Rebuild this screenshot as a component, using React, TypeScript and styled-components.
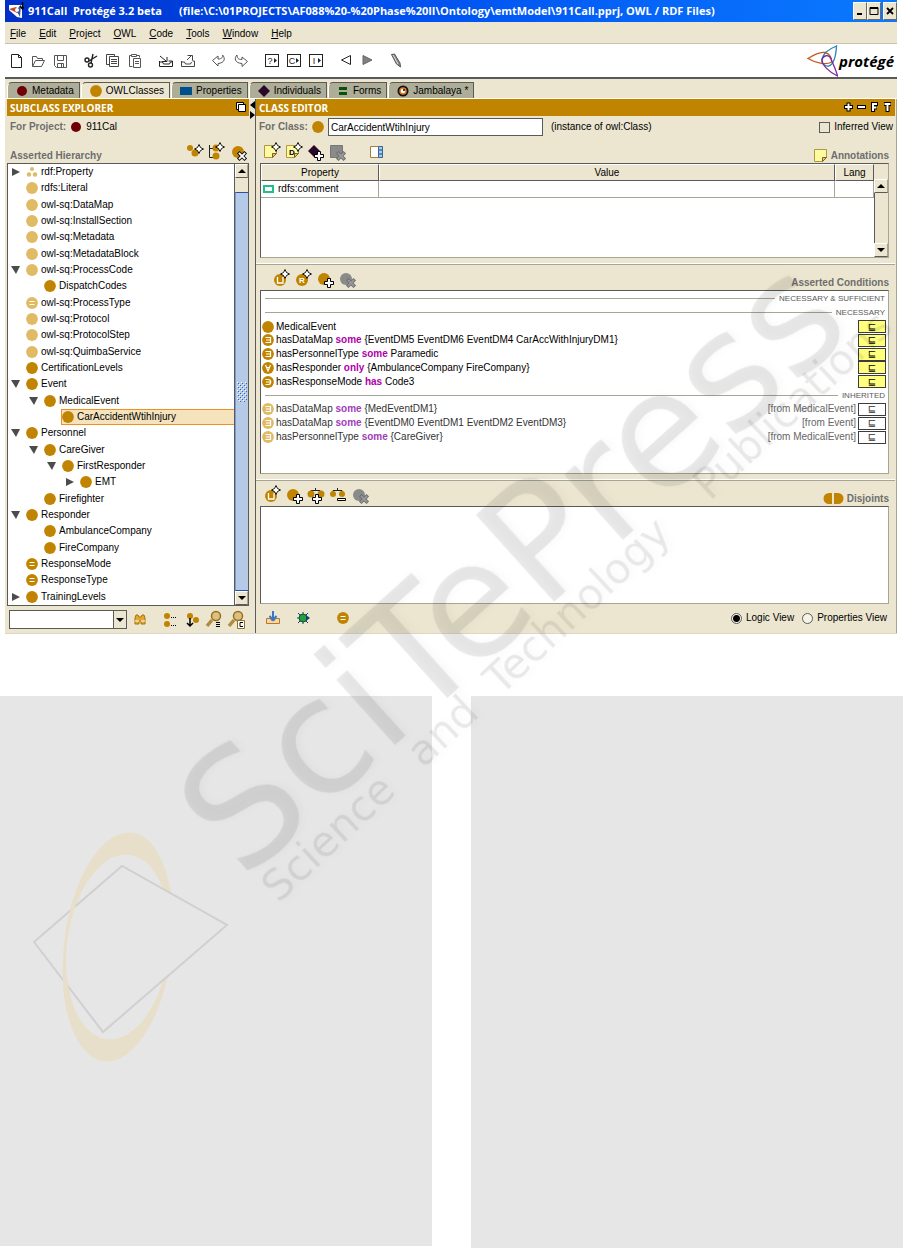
import React from "react";
import styled, { createGlobalStyle, css } from "styled-components";

const C = {
  beige: "#ece6d0",
  gold: "#c08400",
  pale: "#e0ba64",
  dark: "#5a5a5a",
  mid: "#a6a698",
  tab: "#adad98",
  label: "#6e6e6e",
  maroon: "#6e0008",
};

const SANS = `"Liberation Sans", Arial, sans-serif`;
const HUMAN = `"Open Sans", "Noto Sans", sans-serif`;

const GlobalStyle = createGlobalStyle`
  *, *::before, *::after { box-sizing: border-box; }
  body { margin: 0; background: #fff; color: #000; font: 10px/14px ${SANS}; }
  button, input, select { font: inherit; color: inherit; margin: 0; }
  ul { list-style: none; margin: 0; padding: 0; }
`;

/* ---------- page ---------- */

const Page = styled.div`
  position: relative;
  overflow: hidden;
`;

const AppWindow = styled.main`
  margin: 0 21px 0 5px;
  background: ${C.beige};
  border-bottom: 1px solid #dcd8c8;
`;

const TitleBar = styled.header`
  display: flex;
  align-items: center;
  height: 22px;
  padding-left: 3px;
  background: linear-gradient(90deg, #0030c8, #0050f0 45%, #0a7aff);
  color: #fff;
`;

const Title = styled.h1`
  flex: 1;
  margin: 0 0 0 4px;
  font: bold 11px/22px ${HUMAN};
  white-space: pre;
`;

const WindowButton = styled.button<{ $apart?: boolean }>`
  width: 14px;
  height: 18px;
  padding: 0;
  margin-left: ${(p) => (p.$apart ? 2 : 0)}px;
  border: 1px solid;
  border-color: #fff #6e6a5c #6e6a5c #fff;
  background: ${C.beige};
  svg { display: block; margin: auto; }
`;

const MenuBar = styled.nav`
  display: flex;
  gap: 13px;
  height: 22px;
  padding-left: 5px;
  border-bottom: 1px solid #c8c2ac;
`;

const MenuButton = styled.button`
  padding: 2px 0 0;
  border: 0;
  background: none;
  &::first-letter { text-decoration: underline; }
`;

const ToolBar = styled.div`
  display: flex;
  align-items: center;
  gap: 9px;
  height: 35px;
  background: #fff;
  border-bottom: 2px solid ${C.dark};
`;

const Group = styled.div<{ $lead?: number }>`
  display: flex;
  margin-left: ${(p) => p.$lead ?? 0}px;
`;

const IconButton = styled.button`
  display: flex;
  align-items: center;
  justify-content: center;
  width: 22px;
  height: 22px;
  padding: 0;
  border: 0;
  background: none;
`;

const Logo = styled.div`
  display: flex;
  align-items: center;
  gap: 1px;
  margin-left: auto;
  padding-right: 3px;
  font: italic bold 15px/22px ${HUMAN};
`;

/* ---------- tabs ---------- */

const TabStrip = styled.div`
  display: flex;
  align-items: flex-end;
  gap: 1px;
  height: 19px;
  padding-left: 2px;
`;

const Tab = styled.button<{ $active?: boolean }>`
  display: flex;
  align-items: center;
  gap: 4px;
  height: 16px;
  padding: 0 5px 0 8px;
  border: 0;
  border-top: 1px solid ${C.dark};
  border-right: 1px solid ${C.dark};
  border-left: 1px solid #fff;
  border-top-left-radius: 5px;
  background: ${(p) => (p.$active ? C.beige : C.tab)};
`;

/* ---------- panes ---------- */

const Panes = styled.div`
  display: grid;
  grid-template-columns: 244px 7px 1fr;
  border-top: 1px solid #fff;
`;

const Explorer = styled.section`
  padding-left: 2px;
  display: flex;
  flex-direction: column;
`;

const Splitter = styled.div`
  border-right: 1px solid ${C.dark};
  padding-top: 2px;
  background: ${C.beige};
  svg { display: block; }
`;

const Editor = styled.section`
  display: flex;
  flex-direction: column;
  border-right: 1px solid ${C.mid};
  padding-right: 1px;
`;

const GoldBar = styled.div`
  display: flex;
  align-items: center;
  justify-content: space-between;
  height: 17px;
  padding: 0 3px;
  background: ${C.gold};
  color: #fff;
`;

const GoldTitle = styled.h2`
  margin: 0;
  font: bold 10px/16px ${HUMAN};
`;

const FieldRow = styled.div`
  display: flex;
  align-items: center;
  height: 22px;
  padding: 0 2px 0 3px;
  gap: 4px;
`;

const Caption = styled.h3`
  margin: 0;
  font: bold 10px/14px ${SANS};
  color: ${C.label};
`;

const CaptionLabel = styled.label`
  font-weight: bold;
  color: ${C.label};
`;

const Actions = styled.div<{ $height: number; $indent?: number }>`
  display: flex;
  align-items: flex-end;
  height: ${(p) => p.$height}px;
  padding: 0 6px 0 ${(p) => p.$indent ?? 5}px;
  ${Caption} { margin-left: auto; display: flex; align-items: center; gap: 3px; }
`;

const ExplorerHead = styled.div`
  display: flex;
  align-items: flex-end;
  height: 25px;
  padding: 0 0 0 3px;
  ${Caption} { flex: 1; }
`;

const Inset = styled.div`
  border: 1px solid;
  border-color: ${C.dark} ${C.mid} ${C.mid} ${C.dark};
  background: #fff;
`;

const TreeBox = styled(Inset)`
  display: grid;
  grid-template-columns: 1fr 14px;
  width: 242px;
  height: 443px;
  border-color: ${C.dark};
`;

const TreeList = styled.ul`
  display: flex;
  flex-direction: column;
`;

const TreeRow = styled.li<{ $level: number }>`
  flex: 1;
  display: flex;
  align-items: center;
  padding-left: ${(p) => p.$level * 18}px;
`;

const Twisty = styled.span`
  display: flex;
  justify-content: center;
  width: 15px;
  margin-right: 3px;
`;

const NodeLabel = styled.span<{ $selected?: boolean }>`
  display: flex;
  align-items: center;
  gap: 3px;
  line-height: 14px;
  ${(p) =>
    p.$selected &&
    css`
      flex: 1;
      background: #f4e3bd;
      outline: 1px solid #f09020;
    `}
`;

const ScrollBar = styled.div`
  display: flex;
  flex-direction: column;
  border-left: 1px solid ${C.dark};
  background: ${C.beige};
`;

const ScrollButton = styled.button`
  display: flex;
  align-items: center;
  justify-content: center;
  height: 14px;
  padding: 0;
  border: 1px solid ${C.dark};
  border-color: #fff ${C.mid} ${C.dark} #fff;
  background: ${C.beige};
`;

const Track = styled.div`
  flex: 1;
  display: flex;
  flex-direction: column;
  padding-top: 14px;
`;

const Thumb = styled.div`
  flex: 1;
  display: flex;
  align-items: center;
  justify-content: center;
  border: 1px solid #2a50a8;
  border-width: 1px 0 1px 1px;
  border-left-color: #7a9cd4;
  background: #b5cae6;
`;

const ExplorerFoot = styled.div`
  display: flex;
  align-items: center;
  height: 27px;
  padding-left: 2px;
`;

const Combo = styled.label`
  display: grid;
  width: 118px;
  height: 19px;
  margin-right: 2px;
  border: 1px solid ${C.dark};
  background: #fff;
  > * { grid-area: 1 / 1; }
  svg {
    justify-self: end;
    pointer-events: none;
    border-left: 1px solid ${C.dark};
    background: ${C.beige};
  }
`;

const ComboSelect = styled.select`
  appearance: none;
  border: 0;
  background: none;
  padding: 0 14px 0 3px;
`;

const ClassInput = styled.input`
  width: 215px;
  height: 18px;
  padding: 0 2px;
  border: 1px solid ${C.dark};
  background: #fff;
`;

const Note = styled.span`
  flex: 1;
  padding-left: 4px;
`;

const CheckLabel = styled.label`
  display: flex;
  align-items: center;
  gap: 4px;
`;

const CheckBox = styled.input`
  appearance: none;
  width: 11px;
  height: 11px;
  border: 1px solid ${C.dark};
  background: ${C.beige};
`;

const RadioDot = styled.input`
  appearance: none;
  width: 11px;
  height: 11px;
  border: 1px solid ${C.dark};
  border-radius: 50%;
  background: #f6f3e6;
  &:checked { background: radial-gradient(#000 0 3px, #f6f3e6 4px); }
`;

const Boxed = styled.div`
  padding: 0 6px 6px 4px;
  border-bottom: 1px solid ${C.mid};
  box-shadow: inset 0 -1px #fff;
`;

/* ---------- annotations table ---------- */

const TableBox = styled(Inset)`
  display: grid;
  grid-template-columns: 1fr 14px;
  height: 95px;
`;

const Table = styled.table`
  width: 100%;
  align-self: start;
  border-collapse: separate;
  border-spacing: 0;
  table-layout: fixed;
`;

const Th = styled.th<{ $width?: number }>`
  width: ${(p) => (p.$width ? p.$width + "px" : "auto")};
  height: 17px;
  padding: 0;
  font-weight: normal;
  background: ${C.beige};
  border: 1px solid;
  border-color: #fff ${C.dark} ${C.dark} #fff;
`;

const Td = styled.td`
  height: 17px;
  padding: 0 2px;
  border: 1px solid ${C.mid};
  border-width: 0 1px 1px 0;
`;

const CellContent = styled.span`
  display: flex;
  align-items: center;
  gap: 4px;
`;

const TableScroll = styled.div`
  display: flex;
  flex-direction: column;
  padding-top: 15px;
  background: ${C.beige};
`;

const TableTrack = styled.div`
  flex: 1;
  border-left: 1px solid ${C.dark};
`;

/* ---------- conditions ---------- */

const ConditionBox = styled(Inset)`
  height: 184px;
  padding: 1px 2px 0 0;
`;

const ConditionList = styled.ul`
  display: grid;
  grid-template-rows: repeat(11, 1fr);
  height: 152px;
`;

const SectionRow = styled.li`
  display: flex;
  align-items: center;
  gap: 4px;
  padding: 0 1px 0 4px;
  font-size: 8px;
  line-height: 12px;
  color: #585858;
  &::before { content: ""; flex: 1; border-top: 1px solid ${C.mid}; }
`;

const ConditionRow = styled.li<{ $inherited?: boolean }>`
  display: flex;
  align-items: center;
  gap: 2px;
  padding-left: 1px;
  line-height: 12px;
  white-space: pre;
  color: ${(p) => (p.$inherited ? "#333" : "#000")};
  b { color: ${(p) => (p.$inherited ? "#a040b8" : "#b000a8")}; }
`;

const Origin = styled.span`
  margin-left: auto;
  color: #666;
`;

const SubsetButton = styled.button<{ $plain?: boolean }>`
  width: 28px;
  height: 13px;
  padding: 0;
  border: 1px solid #3c3c3c;
  background: ${(p) => (p.$plain ? "#fff" : "#ffff7c")};
  font: 10px/10px "DejaVu Sans", sans-serif;
`;

const DisjointBox = styled(Inset)`
  height: 98px;
  margin: 0 6px 0 4px;
`;

const EditorFoot = styled.div`
  display: flex;
  align-items: center;
  height: 28px;
  padding: 0 8px 0 6px;
`;

const FootButtons = styled.div`
  display: flex;
  flex: 1;
  gap: 8px;
  > :last-child { margin-left: 10px; }
`;

const Radios = styled.div`
  display: flex;
  gap: 8px;
`;

/* ---------- lower blocks and watermark ---------- */

const Columns = styled.div`
  display: grid;
  grid-template-columns: 1fr 1fr;
  gap: 39px;
  padding: 62px 15px 0 0;
`;

const Column = styled.div<{ $height: number }>`
  height: ${(p) => p.$height}px;
  background: #e6e6e6;
`;

const Watermark = styled.svg`
  position: absolute;
  top: 0;
  left: 0;
  pointer-events: none;
  font-family: "DejaVu Sans", sans-serif;
  text {
    fill: rgba(0, 0, 0, 0.085);
    filter: drop-shadow(4px 2px 3px rgba(0, 0, 0, 0.25));
  }
`;

/* ---------- drawings ---------- */

type Kids = { children?: React.ReactNode };

const Ico = ({ children }: Kids) => (
  <svg width="20" height="20" viewBox="0 0 20 20" fill="none" stroke="#222" aria-hidden="true">
    {children}
  </svg>
);

const Spark = ({ x = 14, y = 4 }) => (
  <path
    d={`M${x} ${y - 4.5}l1.500 3 3 1.500-3 1.500-1.500 3-1.500-3-3-1.500 3-1.500z`}
    fill="#fff"
    stroke="#000"
    strokeWidth=".9"
  />
);
const Plus = ({ x = 14, y = 14 }) => (
  <path
    d={`M${x - 1.5} ${y - 4.5}h3v3h3v3h-3v3h-3v-3h-3v-3h3z`}
    fill="#fff"
    stroke="#000"
  />
);
const Cross = ({ x = 14, y = 14, gray = false }) => (
  <g strokeLinecap="square">
    <path d={`M${x - 2.5} ${y - 2.5}l5 5m0-5l-5 5`} stroke={gray ? "#6c6c6c" : "#000"} strokeWidth="3.600" />
    <path d={`M${x - 2.5} ${y - 2.5}l5 5m0-5l-5 5`} stroke={gray ? "#999" : "#fff"} strokeWidth="1.800" />
  </g>
);
const Ball = ({ x = 9, y = 10, r = 6, fill = C.gold }) => (
  <circle cx={x} cy={y} r={r} fill={fill} stroke="none" />
);
const Letter = ({ x = 9, y = 13, size = 8, children }: Kids & { x?: number; y?: number; size?: number }) => (
  <text x={x} y={y} fontSize={size} fontWeight="bold" textAnchor="middle" fill="#fff" stroke="none">
    {children}
  </text>
);
const UnionBall = () => (
  <>
    <Ball y={11} />
    <path d="M6.500 8v6h5.500V8" stroke="#fff" strokeWidth="1.300" />
  </>
);

type Kind = "plain" | "eq" | "some" | "only" | "has" | "dots";

const Dot = ({ kind = "plain", fill = C.gold }: { kind?: Kind; fill?: string }) => (
  <svg width="12" height="12" viewBox="0 0 12 12" fill="none" stroke="#fff" strokeWidth="1.2" aria-hidden="true">
    {kind === "dots" ? (
      <g fill={fill} stroke="none">
        <circle cx="6" cy="3" r="2" />
        <circle cx="3" cy="8.5" r="2.2" />
        <circle cx="9" cy="8.5" r="2.2" />
      </g>
    ) : (
      <circle cx="6" cy="6" r="5.9" fill={fill} stroke="none" />
    )}
    {kind === "eq" && <path d="M3.5 4.5h5M3.5 7.5h5" />}
    {kind === "some" && <path d="M3.5 3.5h5v5h-5M4 6h4.5" />}
    {kind === "only" && <path d="M3.5 3l2.5 6 2.5-6M4.5 5.5h3" />}
    {kind === "has" && <path d="M3.5 3.5h2.7a2.4 2.4 0 010 5H3.5M4 6h4.5" />}
  </svg>
);

const Tri = ({ dir }: { dir: "up" | "down" | "right" | "tree" }) => (
  <svg width="10" height="10" viewBox="0 0 10 10" aria-hidden="true">
    {dir === "up" && <path d="M1 7h8L5 3z" />}
    {dir === "down" && <path d="M1 3h8L5 7z" />}
    {dir === "right" && <path d="M1 1v8l8-4z" fill="#4c4c4c" />}
    {dir === "tree" && <path d="M0 1h9L5 9z" fill="#4c4c4c" />}
  </svg>
);

const NoteShape = ({ x = 2, y = 4 }) => (
  <g transform={`translate(${x} ${y})`}>
    <path d="M.5.5h12v8l-4 4h-8z" fill="#fdfaa0" stroke="#b09840" />
    <path d="M8.5 12.5v-4h4z" fill="#e8c860" stroke="#806020" />
  </g>
);

const PlayBox = ({ children }: Kids) => (
  <Ico>
    <rect x="3.5" y="3.5" width="13" height="12" />
    <text x="8" y="13" fontSize="9" textAnchor="middle" fill="#222" stroke="none">{children}</text>
    <path d="M12 7v5l3-2.500z" fill="#222" stroke="none" />
  </Ico>
);

const TOOLS: [string, React.ReactNode][][] = [
  [
    ["New", <Ico><path d="M5.500 3.500h7l3 3v10h-10zM12.500 3.500v3h3" /></Ico>],
    ["Open", <Ico><path d="M4.500 15.500v-10h4l1 2h5v2M4.500 15.500l3-6h9l-3 6z" stroke="#555" /></Ico>],
    ["Save", <Ico><path d="M4.500 4.500h12v12h-10l-2-2zM7.500 4.500v5h6v-5M7.500 16.500v-4h6v4M11.500 13v3" stroke="#555" /></Ico>],
  ],
  [
    ["Cut", <Ico><path d="M16 5l-8 5M12 3l-2 9" strokeWidth="1.4" /><circle cx="6" cy="9" r="2" strokeWidth="1.400" /><circle cx="9.500" cy="14" r="2" strokeWidth="1.400" /></Ico>],
    ["Copy", <Ico><path d="M3.500 3.500h8v2M3.500 3.500v10h3M6.500 5.500h9v10h-9zM8 8.500h6M8 10.500h6M8 12.500h6" stroke="#444" /></Ico>],
    ["Paste", <Ico><path d="M7 4.500H4.500v11h3M12 4.500h2.500v2M6.500 3.500h5v2h-5zM8.500 7.500h7v9h-7zM10 10.500h4M10 12.500h4" stroke="#555" /></Ico>],
  ],
  [
    ["Archive", <Ico><path d="M3.500 10v5.500h13V10h-4M3.500 11h3l1 2h6l1-2h2M4 5l6 5M6 10.500h5V6" /></Ico>],
    ["Revert", <Ico><path d="M3.500 10v5.500h13V10h-2M3.500 11h3l1 2h5l1-2M9 9l5-5M9.500 4.500h5v5" stroke="#444" /></Ico>],
  ],
  [
    ["Undo", <Ico><path d="M3.500 9.500L9 5v3c4 0 5-2 4.500-4 3 3 2.500 8-4.500 8.500V15z" stroke="#555" /></Ico>],
    ["Redo", <Ico><path d="M16.500 10.500L11 6v2.500C7 8.500 6 7 6 4c-3 3-2.500 8 5 8.500v3z" stroke="#555" /></Ico>],
  ],
  [
    ["Query", <PlayBox>?</PlayBox>],
    ["Classify", <PlayBox>C</PlayBox>],
    ["Infer", <PlayBox>I</PlayBox>],
  ],
  [
    ["Back", <Ico><path d="M13.500 4.500v9l-9-4.500z" /></Ico>],
    ["Forward", <Ico><path d="M4 4.500v9l9-4.500z" fill="#808080" stroke="#666" /></Ico>],
  ],
  [["Edit", <Ico><path d="M1.500 3.500l3-.5 5.500 9 .5 4-4-3z" fill="#888" stroke="#555" /><path d="M3 4l5 9" stroke="#ddd" /></Ico>]],
];

const Protege = () => (
  <svg width="31" height="32" viewBox="0 0 31 32" fill="none" strokeWidth="1.300" aria-hidden="true">
    <path d="M1 13.500C8 9 13 6.500 18 7.500c5 1 7 6 6.500 9.500C20 20 10 19 1 13.500z" stroke="#c05a20" />
    <path d="M29.500 1C22 4 16 9 15 14c-1 4 3 8 7 7 5-2 7-11 7.500-20z" stroke="#2a80b0" />
    <path d="M30.500 31C22 27 15 20 15 15c1-5 7-6 9-1 2 5 5 11 6.500 17z" stroke="#7a28a0" />
  </svg>
);

/* ---------- data ---------- */

type Node = { name: string; level: number; open?: boolean; kind?: Kind; pale?: boolean; selected?: boolean };

const TREE: Node[] = [
  { name: "rdf:Property", level: 0, open: false, kind: "dots", pale: true },
  { name: "rdfs:Literal", level: 0, pale: true },
  { name: "owl-sq:DataMap", level: 0, pale: true },
  { name: "owl-sq:InstallSection", level: 0, pale: true },
  { name: "owl-sq:Metadata", level: 0, pale: true },
  { name: "owl-sq:MetadataBlock", level: 0, pale: true },
  { name: "owl-sq:ProcessCode", level: 0, open: true, pale: true },
  { name: "DispatchCodes", level: 1 },
  { name: "owl-sq:ProcessType", level: 0, kind: "eq", pale: true },
  { name: "owl-sq:Protocol", level: 0, pale: true },
  { name: "owl-sq:ProtocolStep", level: 0, pale: true },
  { name: "owl-sq:QuimbaService", level: 0, pale: true },
  { name: "CertificationLevels", level: 0 },
  { name: "Event", level: 0, open: true },
  { name: "MedicalEvent", level: 1, open: true },
  { name: "CarAccidentWtihInjury", level: 2, selected: true },
  { name: "Personnel", level: 0, open: true },
  { name: "CareGiver", level: 1, open: true },
  { name: "FirstResponder", level: 2, open: true },
  { name: "EMT", level: 3, open: false },
  { name: "Firefighter", level: 1 },
  { name: "Responder", level: 0, open: true },
  { name: "AmbulanceCompany", level: 1 },
  { name: "FireCompany", level: 1 },
  { name: "ResponseMode", level: 0, kind: "eq" },
  { name: "ResponseType", level: 0, kind: "eq" },
  { name: "TrainingLevels", level: 0, open: false },
];

type Condition = { kind: Kind; text: string; word?: string; rest?: string; from?: string };

const NECESSARY: Condition[] = [
  { kind: "plain", text: "MedicalEvent" },
  { kind: "some", text: "hasDataMap ", word: "some", rest: " {EventDM5 EventDM6 EventDM4 CarAccWithInjuryDM1}" },
  { kind: "some", text: "hasPersonnelType ", word: "some", rest: " Paramedic" },
  { kind: "only", text: "hasResponder ", word: "only", rest: " {AmbulanceCompany FireCompany}" },
  { kind: "has", text: "hasResponseMode ", word: "has", rest: " Code3" },
];

const INHERITED: Condition[] = [
  { kind: "some", text: "hasDataMap ", word: "some", rest: " {MedEventDM1}", from: "[from MedicalEvent]" },
  { kind: "some", text: "hasDataMap ", word: "some", rest: " {EventDM0 EventDM1 EventDM2 EventDM3}", from: "[from Event]" },
  { kind: "some", text: "hasPersonnelType ", word: "some", rest: " {CareGiver}", from: "[from MedicalEvent]" },
];

const ConditionItem = ({ c }: { c: Condition }) => (
  <ConditionRow $inherited={!!c.from}>
    <Dot kind={c.kind} fill={c.from ? C.pale : C.gold} />
    <span>{c.text}{c.word && <b>{c.word}</b>}{c.rest}</span>
    <Origin>{c.from}</Origin>
    <SubsetButton $plain={!!c.from}>⊑</SubsetButton>
  </ConditionRow>
);

const Btn = ({ label, children }: Kids & { label: string }) => (
  <IconButton aria-label={label}>{children}</IconButton>
);

const GrayDelete = () => (
  <Ico><Ball fill="#8a8a8a" /><Cross gray /></Ico>
);

const TABS: [string, React.ReactNode][] = [
  ["Metadata", <svg width="12" height="12"><circle cx="6" cy="6" r="5" fill={C.maroon} /></svg>],
  ["OWLClasses", <Dot />],
  ["Properties", <svg width="12" height="12"><rect y="2" width="12" height="8" fill="#00508c" /></svg>],
  ["Individuals", <svg width="12" height="12"><path d="M6 0l6 6-6 6-6-6z" fill="#2a0828" /></svg>],
  ["Forms", <svg width="12" height="12"><path d="M2 2h8v3H2zM2 7h8v3H2z" fill="#0a500a" /></svg>],
  ["Jambalaya *", <svg width="12" height="12"><circle cx="6" cy="6" r="5.500" fill="#111" /><circle cx="6" cy="6" r="3" fill="#fff" stroke="#e07820" strokeWidth="1.500" /><circle cx="7" cy="5" r="1" /></svg>],
];

const Ring = "M64 947a54 115 0 10108 0a54 115 0 10-108 0zM67 947a51 93 0 11102 0a51 93 0 11-102 0z";

export default function App() {
  return (
    <Page>
      <GlobalStyle />
      <AppWindow>
        <TitleBar>
          <svg width="16" height="18" viewBox="0 0 16 18" aria-hidden="true">
            <path d="M1 3h13v13l-5-1-8-7z" fill="#fff" />
            <path d="M1 7l7-2 4 4-3 2z" fill="#c04828" />
            <path d="M8 8l5-5-1 12z" fill="#3858a0" />
            <circle cx="9" cy="8" r="2" fill="#fff" />
            <path d="M14.500 0v6M12 4l2.500 3L16 5" stroke="#000" strokeWidth="1.400" fill="none" />
          </svg>
          <Title>{"911Call  Protégé 3.2 beta      (file:\\C:\\01PROJECTS\\AF088%20-%20Phase%20II\\Ontology\\emtModel\\911Call.pprj, OWL / RDF Files)"}</Title>
          <WindowButton aria-label="Minimize"><svg width="10" height="10"><path d="M2 8h5" stroke="#000" strokeWidth="2" /></svg></WindowButton>
          <WindowButton aria-label="Maximize"><svg width="10" height="10"><path d="M1 1.500h8v7H1zM1 2.500h8" stroke="#000" fill="none" /></svg></WindowButton>
          <WindowButton $apart aria-label="Close"><svg width="10" height="10"><path d="M2 2l6 6M8 2L2 8" stroke="#000" strokeWidth="1.800" /></svg></WindowButton>
        </TitleBar>
        <MenuBar>
          {["File", "Edit", "Project", "OWL", "Code", "Tools", "Window", "Help"].map((m) => (
            <MenuButton key={m}>{m}</MenuButton>
          ))}
        </MenuBar>
        <ToolBar>
          {TOOLS.map((g, i) => (
            <Group key={i}>
              {g.map(([name, icon]) => <Btn key={name} label={name}>{icon}</Btn>)}
            </Group>
          ))}
          <Logo><Protege />protégé</Logo>
        </ToolBar>
        <TabStrip role="tablist">
          {TABS.map(([name, icon]) => (
            <Tab key={name} role="tab" aria-selected={name === "OWLClasses"} $active={name === "OWLClasses"}>
              {icon}{name}
            </Tab>
          ))}
        </TabStrip>

        <Panes>
          <Explorer>
            <GoldBar>
              <GoldTitle>SUBCLASS EXPLORER</GoldTitle>
              <svg width="10" height="11" fill="#fff" stroke="#000" aria-hidden="true">
                <path d="M.5 .5h7v7h-7z" /><path d="M2.500 2.500h7v7h-7z" />
              </svg>
            </GoldBar>
            <FieldRow>
              <Caption>For Project:</Caption>
              <svg width="12" height="12" aria-hidden="true"><circle cx="6" cy="6" r="5" fill={C.maroon} /></svg>
              911Cal
            </FieldRow>
            <ExplorerHead>
              <Caption>Asserted Hierarchy</Caption>
              <Btn label="Create subclass"><Ico><Ball x={6} y={6} r={3} /><Ball x={11} y={11} r={3.500} /><Spark x={15} y={7} /></Ico></Btn>
              <Btn label="Create sibling class"><Ico><path d="M3.500 3v12.500h4M3.500 6.500h4" /><Ball x={10} y={6} r={3.500} /><Ball x={10} y={14} r={3.500} /><Spark x={14} y={5} /></Ico></Btn>
              <Btn label="Delete class"><Ico><Ball x={10} y={10} /><Cross x={14} /></Ico></Btn>
            </ExplorerHead>
            <TreeBox>
              <TreeList>
                {TREE.map((n) => (
                  <TreeRow key={n.name} $level={n.level}>
                    <Twisty>{n.open !== undefined && <Tri dir={n.open ? "tree" : "right"} />}</Twisty>
                    <NodeLabel $selected={n.selected}>
                      <Dot kind={n.kind} fill={n.pale ? C.pale : C.gold} />
                      {n.name}
                    </NodeLabel>
                  </TreeRow>
                ))}
              </TreeList>
              <ScrollBar>
                <ScrollButton aria-label="Scroll up"><Tri dir="up" /></ScrollButton>
                <Track>
                  <Thumb>
                    <svg width="10" height="20" aria-hidden="true">
                      <defs>
                        <pattern id="grip" width="4" height="4" patternUnits="userSpaceOnUse">
                          <path d="M0 0h1v1H0zM2 2h1v1H2z" fill="#fff" />
                          <path d="M1 1h1v1H1zM3 3h1v1H3z" fill="#3c64b4" />
                        </pattern>
                      </defs>
                      <rect width="10" height="20" fill="url(#grip)" />
                    </svg>
                  </Thumb>
                </Track>
                <ScrollButton aria-label="Scroll down"><Tri dir="down" /></ScrollButton>
              </ScrollBar>
            </TreeBox>
            <ExplorerFoot>
              <Combo>
                <ComboSelect aria-label="Search classes"><option></option></ComboSelect>
                <svg width="13" height="17" aria-hidden="true"><path d="M2 7h8l-4 4z" /></svg>
              </Combo>
              <Btn label="Find"><Ico><path d="M5 8l1-3h2l1 2h2l1-2h2l1 3v6h-4v-3h-2v3H5z" fill="#e0a830" stroke="#a87408" /><path d="M5 11h4M11 11h4" stroke="#fff" /></Ico></Btn>
              <Group $lead={8}>
                <Btn label="Collapse"><Ico><Ball x={7} y={6} r={3} /><Ball x={7} y={14} r={3} /><path d="M11 7.500h6M11 15.500h6" stroke="#000" strokeDasharray="1 1" /></Ico></Btn>
                <Btn label="Move"><Ico><Ball x={8} y={6} r={3} /><Ball x={14} y={10} r={3} /><path d="M8 8v7M5 13l3 3 3-3" stroke="#000" strokeWidth="1.500" /></Ico></Btn>
                <Btn label="Search subclasses"><Ico><circle cx="12" cy="6" r="4.500" fill="#dcc080" stroke="#98701c" strokeWidth="1.500" /><path d="M8 10l-5 6" stroke="#b08c3c" strokeWidth="3.500" /><path d="M12 12.500h4M12 14.500h4M12 16.500h4" stroke="#000" /></Ico></Btn>
                <Btn label="Search classes"><Ico><circle cx="12" cy="6" r="4.500" fill="#dcc080" stroke="#98701c" strokeWidth="1.500" /><path d="M8 10l-5 6" stroke="#b08c3c" strokeWidth="3.500" /><path d="M11.500 10.500h7v8h-7z" fill="#fff" stroke="#98701c" /><path d="M17 12.500h-3v4h3" stroke="#000" /></Ico></Btn>
              </Group>
            </ExplorerFoot>
          </Explorer>

          <Splitter>
            <svg width="6" height="18" aria-hidden="true"><path d="M6 0v8L1 4zM1 10v8l5-4z" /></svg>
          </Splitter>

          <Editor>
            <GoldBar>
              <GoldTitle>CLASS EDITOR</GoldTitle>
              <svg width="48" height="13" viewBox="0 0 48 13" aria-hidden="true" fill="none">
                <g stroke="#000" strokeWidth="4"><path d="M0 6h9M4.500 1.500v9M13 6h9M29 11V3h5M29 6.500h4M40 3h7M43.500 3v8" /></g>
                <g stroke="#fff" strokeWidth="2"><path d="M1 6h7M4.500 2.500v7M14 6h7M29 10V3h4M29 6.500h3.500M40.500 3h6M43.500 3v7" /></g>
              </svg>
            </GoldBar>
            <FieldRow>
              <CaptionLabel htmlFor="cls">For Class:</CaptionLabel>
              <Dot />
              <ClassInput id="cls" defaultValue="CarAccidentWtihInjury" />
              <Note>(instance of owl:Class)</Note>
              <CheckLabel><CheckBox type="checkbox" />Inferred View</CheckLabel>
            </FieldRow>
            <Actions $height={25}>
              <Btn label="Create annotation"><Ico><NoteShape y={3} /><Spark x={14} y={5} /></Ico></Btn>
              <Btn label="Create data annotation"><Ico><NoteShape y={3} /><text x="8" y="13" fontSize="8" fontWeight="bold" textAnchor="middle" fill="#000" stroke="none">D</text><Spark x={14} y={5} /></Ico></Btn>
              <Btn label="Add annotation"><Ico><path d="M8 3l6 6-6 6-6-6z" fill="#2a0828" stroke="none" /><Plus x={13} /></Ico></Btn>
              <Btn label="Remove annotation"><Ico><path d="M2.500 3.500h12v12h-12z" fill="#8a8a8a" stroke="#777" /><Cross gray x={13} /></Ico></Btn>
              <Group $lead={16}>
                <Btn label="Show panel"><Ico><path d="M4.500 4.500h12v11h-12z" fill="#fff" stroke="#a08040" /><path d="M12.500 4.500h4v11h-4z" fill="#a8c8e8" stroke="#3868a0" /><path d="M13 8h3M13 12h3" stroke="#204880" /></Ico></Btn>
              </Group>
              <Caption><svg width="14" height="14" aria-hidden="true" fill="none"><NoteShape x={0} y={0} /></svg>Annotations</Caption>
            </Actions>
            <Boxed>
              <TableBox>
                <Table>
                  <thead>
                    <tr><Th $width={118}>Property</Th><Th>Value</Th><Th $width={39}>Lang</Th></tr>
                  </thead>
                  <tbody>
                    <tr>
                      <Td>
                        <CellContent>
                          <svg width="11" height="8" aria-hidden="true"><rect x="1" y="1" width="9" height="6" fill="#fff" stroke="#20c088" strokeWidth="2" /></svg>
                          rdfs:comment
                        </CellContent>
                      </Td>
                      <Td /><Td />
                    </tr>
                  </tbody>
                </Table>
                <TableScroll>
                  <ScrollButton aria-label="Scroll up"><Tri dir="up" /></ScrollButton>
                  <TableTrack />
                  <ScrollButton aria-label="Scroll down"><Tri dir="down" /></ScrollButton>
                </TableScroll>
              </TableBox>
            </Boxed>

            <Actions $height={25} $indent={14}>
              <Btn label="Create expression"><Ico><UnionBall /><Spark x={14} y={5} /></Ico></Btn>
              <Btn label="Create restriction"><Ico><Ball y={11} /><Letter y={14}>R</Letter><Spark x={14} y={5} /></Ico></Btn>
              <Btn label="Add class"><Ico><Ball /><Plus /></Ico></Btn>
              <Btn label="Remove condition"><GrayDelete /></Btn>
              <Caption>Asserted Conditions</Caption>
            </Actions>
            <Boxed>
              <ConditionBox>
                <ConditionList>
                  <SectionRow>NECESSARY &amp; SUFFICIENT</SectionRow>
                  <SectionRow>NECESSARY</SectionRow>
                  {NECESSARY.map((c) => <ConditionItem key={c.text} c={c} />)}
                  <SectionRow>INHERITED</SectionRow>
                  {INHERITED.map((c) => <ConditionItem key={c.text + c.rest} c={c} />)}
                </ConditionList>
              </ConditionBox>
            </Boxed>

            <Actions $height={25}>
              <Btn label="Create disjoint class"><Ico><UnionBall /><Spark x={14} y={5} /></Ico></Btn>
              <Btn label="Add disjoint class"><Ico><Ball /><Plus /></Ico></Btn>
              <Btn label="Add all siblings"><Ico><path d="M5 8V5.500h9V8M9.500 3v2" /><Ball x={5} y={9} r={3.500} /><Ball x={15} y={9} r={3.500} /><Plus x={11} /></Ico></Btn>
              <Btn label="Remove all siblings"><Ico><path d="M5 8V5.500h9V8M9.500 3v2" /><Ball x={5} y={9} r={3} /><Ball x={14} y={9} r={3} /><path d="M9.500 13.500h8v2h-8z" fill="#fff" stroke="#000" /></Ico></Btn>
              <Btn label="Remove disjoint"><GrayDelete /></Btn>
              <Caption><svg width="21" height="12" aria-hidden="true" fill={C.gold}><path d="M9 0v11H6A5.500 5.500 0 016 0zM11 0h4a5.500 5.500 0 010 11h-4z" /></svg>Disjoints</Caption>
            </Actions>
            <DisjointBox />
            <EditorFoot>
              <FootButtons>
                <Btn label="Import"><Ico><path d="M3.500 10.500h4l1 2h3l1-2h4v5h-13z" fill="#f8d8a0" stroke="#b07830" /><path d="M10 3v8M6.500 8l3.500 4 3.500-4" stroke="#3878c8" strokeWidth="2" /></Ico></Btn>
                <Btn label="Debug"><Ico><path d="M10 4v12M5 5l10 10M15 5L5 15M4 10h12" stroke="#204060" /><circle cx="10" cy="10" r="4" fill="#20a040" stroke="#105030" /><path d="M13 7l4 3-4 3z" fill="#203878" stroke="none" /></Ico></Btn>
                <Btn label="Equivalent"><Dot kind="eq" /></Btn>
              </FootButtons>
              <Radios>
                <CheckLabel><RadioDot type="radio" name="view" defaultChecked />Logic View</CheckLabel>
                <CheckLabel><RadioDot type="radio" name="view" />Properties View</CheckLabel>
              </Radios>
            </EditorFoot>
          </Editor>
        </Panes>
      </AppWindow>

      <Columns>
        <Column $height={550} />
        <Column $height={552} />
      </Columns>

      <Watermark width="918" height="1248" viewBox="0 0 918 1248" aria-hidden="true">
        <g transform="rotate(7 118 947)"><path d={Ring} fill="#e8dfcb" fillRule="evenodd" /></g>
        <path d="M34 942l88-76 105 59-124 107z" fill="#e6e6e6" stroke="#d0d0d0" strokeWidth="2" />
        <clipPath id="front"><rect x="0" y="800" width="140" height="300" /></clipPath>
        <g clipPath="url(#front)">
          <g transform="rotate(7 118 947)"><path d={Ring} fill="#e8dfcb" fillRule="evenodd" /></g>
        </g>
        <g transform="translate(243 882) rotate(-42)">
          <text fontSize="160">SciTePress</text>
        </g>
        <g transform="translate(274 908) rotate(-43)" fontSize="42">
          <text x="6">Science</text>
          <text x="204">and</text>
          <text x="310">Technology</text>
          <text x="596">Publications</text>
        </g>
      </Watermark>
    </Page>
  );
}
